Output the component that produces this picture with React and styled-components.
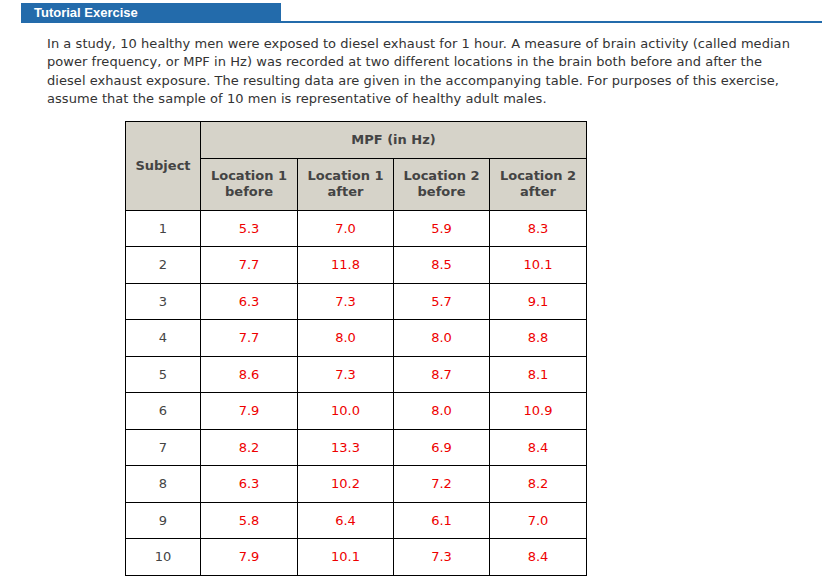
import React from "react";
import styled, { createGlobalStyle } from "styled-components";

const GlobalStyle = createGlobalStyle`
  body {
    margin: 0;
    background: #ffffff;
    font-family: "DejaVu Sans", Verdana, sans-serif;
  }
`;

const Page = styled.div`
  padding: 3px 5px 0 21px;
`;

const TitleBar = styled.div`
  display: flex;
  align-items: stretch;
`;

const TitleTab = styled.div`
  width: 247px;
  height: 20px;
  padding-left: 13px;
  background: #236bab;
  color: #ffffff;
  font-family: "Liberation Sans", Arial, sans-serif;
  font-weight: bold;
  font-size: 13px;
  line-height: 19px;
`;

const TitleRule = styled.div`
  flex: 1;
  border-bottom: 2px solid #236bab;
`;

const Intro = styled.p`
  margin: 12px 0 0 26px;
  width: 770px;
  font-size: 13px;
  line-height: 18.4px;
  color: #333333;
  letter-spacing: 0.05px;
`;

const Table = styled.table`
  margin: 12px 0 0 104px;
  border-collapse: collapse;
  font-size: 13px;
`;

const HeadCell = styled.th`
  background: #d6d3c9;
  border: 1.5px solid #000;
  color: #444444;
  font-weight: bold;
  text-align: center;
  padding: 0;
  height: ${(p) => p.$h || 36}px;
  width: ${(p) => (p.$w ? `${p.$w}px` : "auto")};
  line-height: 16px;
`;

const Cell = styled.td`
  border: 1.5px solid #000;
  text-align: center;
  height: 35.5px;
  padding: 0;
  color: ${(p) => (p.$value ? "#ee0000" : "#444444")};
`;

const rows = [
  [1, "5.3", "7.0", "5.9", "8.3"],
  [2, "7.7", "11.8", "8.5", "10.1"],
  [3, "6.3", "7.3", "5.7", "9.1"],
  [4, "7.7", "8.0", "8.0", "8.8"],
  [5, "8.6", "7.3", "8.7", "8.1"],
  [6, "7.9", "10.0", "8.0", "10.9"],
  [7, "8.2", "13.3", "6.9", "8.4"],
  [8, "6.3", "10.2", "7.2", "8.2"],
  [9, "5.8", "6.4", "6.1", "7.0"],
  [10, "7.9", "10.1", "7.3", "8.4"],
];

const columns = [
  ["Location 1", "before"],
  ["Location 1", "after"],
  ["Location 2", "before"],
  ["Location 2", "after"],
];

export default function App() {
  return (
    <Page>
      <GlobalStyle />
      <TitleBar>
        <TitleTab>Tutorial Exercise</TitleTab>
        <TitleRule />
      </TitleBar>
      <Intro>
        In a study, 10 healthy men were exposed to diesel exhaust for 1 hour. A
        measure of brain activity (called median
        <br />
        power frequency, or MPF in Hz) was recorded at two different locations
        in the brain both before and after the
        <br />
        diesel exhaust exposure. The resulting data are given in the
        accompanying table. For purposes of this exercise,
        <br />
        assume that the sample of 10 men is representative of healthy adult
        males.
      </Intro>
      <Table>
        <thead>
          <tr>
            <HeadCell rowSpan={2} $w={74}>
              Subject
            </HeadCell>
            <HeadCell colSpan={4} $h={36}>
              MPF (in Hz)
            </HeadCell>
          </tr>
          <tr>
            {columns.map((c, i) => (
              <HeadCell key={i} $h={51} $w={i === 0 || i === 3 ? 96 : 95}>
                {c[0]}
                <br />
                {c[1]}
              </HeadCell>
            ))}
          </tr>
        </thead>
        <tbody>
          {rows.map((r) => (
            <tr key={r[0]}>
              <Cell>{r[0]}</Cell>
              {r.slice(1).map((v, i) => (
                <Cell key={i} $value>
                  {v}
                </Cell>
              ))}
            </tr>
          ))}
        </tbody>
      </Table>
    </Page>
  );
}
